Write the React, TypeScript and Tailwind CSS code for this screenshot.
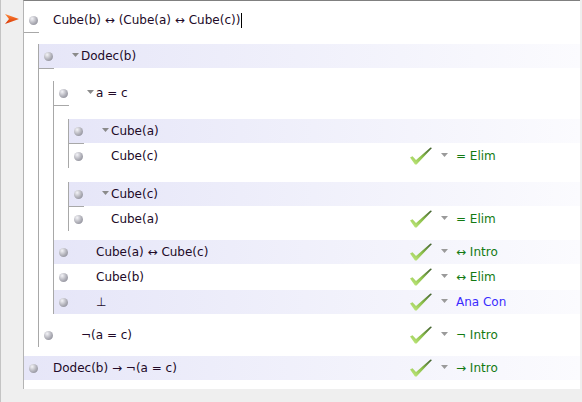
import React from "react";

const font = { fontFamily: '"DejaVu Sans", Verdana, sans-serif' };

const Bullet = () => (
  <div className="ml-[5px] w-[9px] h-[9px] shrink-0 rounded-full bg-radial-[at_35%_30%] from-[#f4f4f8] via-[#b4b4bc] to-[#7c7c88]" />
);

const Tri = ({ color = "#8a8a8a" }: { color?: string }) => (
  <svg width="7" height="4" viewBox="0 0 7 4" className="shrink-0">
    <path d="M0 0 H7 L3.5 4 Z" fill={color} />
  </svg>
);

const Check = () => (
  <svg width="22" height="18" viewBox="0 0 22 18" className="shrink-0">
    <defs>
      <linearGradient id="ck" x1="0" y1="1" x2="1" y2="0">
        <stop offset="0" stopColor="#c8ee84" />
        <stop offset="0.5" stopColor="#8cc04a" />
        <stop offset="1" stopColor="#3c5a2c" />
      </linearGradient>
    </defs>
    <path d="M0 10.5 L2.5 9.2 L6 13 L20.5 0.5 L22 1 L6.6 17.5 L5 17.5 Z" fill="url(#ck)" />
  </svg>
);

type RowProps = {
  text: string;
  main?: boolean;
  assume?: boolean;
  hl?: boolean;
  rule?: string;
  blue?: boolean;
  h?: string;
  caret?: boolean;
};

const Row = ({ text, main, assume, hl, rule, blue, h = "h-[24px]", caret }: RowProps) => (
  <div
    className={`${h} flex items-center ${hl ? "bg-linear-to-r from-[#e6e6f8] to-[#fbfbfe]" : ""}`}
  >
    <Bullet />
    {assume && (
      <div className="ml-[19px] -mt-[2px]">
        <Tri />
      </div>
    )}
    <div
      className={`flex-1 flex items-center text-[12px] text-[#220a28] whitespace-nowrap ${
        main ? "ml-[15px]" : assume ? "ml-[2px]" : "ml-[28px]"
      }`}
    >
      {text}
      {caret && <span className="ml-[1px] inline-block w-px h-[15px] bg-black" />}
    </div>
    <div className="w-[170px] flex items-center shrink-0">
      {rule && (
        <>
          <Check />
          <div className="ml-[9px] -mt-[3px]">
            <Tri color="#9a9a9a" />
          </div>
          <span className={`ml-[8px] text-[12px] ${blue ? "text-[#3a2cff]" : "text-[#137a13]"}`}>{rule}</span>
        </>
      )}
    </div>
  </div>
);

const Bar = () => <div className="h-px w-[15px] bg-[#a8a8a8]" />;

const Sub = ({ className = "", children }: { className?: string; children: React.ReactNode }) => (
  <div className={`ml-[14px] border-l border-[#a8a8a8] ${className}`}>{children}</div>
);

export default function App() {
  return (
    <div className="w-[582px] h-[402px] bg-[#efefef] flex" style={font}>
      {/* gutter */}
      <div className="w-[23px] h-full border-l border-[#c4c4c4] pt-[14px] pl-[4px]">
        <svg width="14" height="10" viewBox="0 0 14 10">
          <defs>
            <linearGradient id="arr" x1="0" y1="0" x2="0" y2="1">
              <stop offset="0" stopColor="#ff8a3a" />
              <stop offset="1" stopColor="#d83200" />
            </linearGradient>
          </defs>
          <path d="M0 0 L14 5 L0 10 L4 5 Z" fill="url(#arr)" />
        </svg>
      </div>

      {/* proof panel */}
      <div className="w-[557px] h-[389px] bg-white border-t border-[#808080] border-l border-l-[#b4b4b4] pt-[7px]">
        <Row text="Cube(b) ↔ (Cube(a) ↔ Cube(c))" main caret />
        <Bar />

        <Sub className="mt-[11px]">
          <Row text="Dodec(b)" assume hl />
          <Bar />

          <Sub className="mt-[12px]">
            <Row text="a = c" assume />
            <Bar />

            <Sub className="mt-[13px]">
              <Row text="Cube(a)" assume hl />
              <Bar />
              <Row text="Cube(c)" rule="= Elim" />
            </Sub>

            <Sub className="mt-[14px]">
              <Row text="Cube(c)" assume hl />
              <Bar />
              <Row text="Cube(a)" rule="= Elim" />
            </Sub>

            <div className="mt-[9px]">
              <Row text="Cube(a) ↔ Cube(c)" hl rule="↔ Intro" />
              <Row text="Cube(b)" rule="↔ Elim" h="h-[26px]" />
              <Row text="⊥" hl rule="Ana Con" blue />
            </div>
          </Sub>

          <div className="mt-[9px]">
            <Row text="¬(a = c)" rule="¬ Intro" />
          </div>
        </Sub>

        <div className="mt-[9px]">
          <Row text="Dodec(b) → ¬(a = c)" main hl rule="→ Intro" />
        </div>
      </div>
    </div>
  );
}
